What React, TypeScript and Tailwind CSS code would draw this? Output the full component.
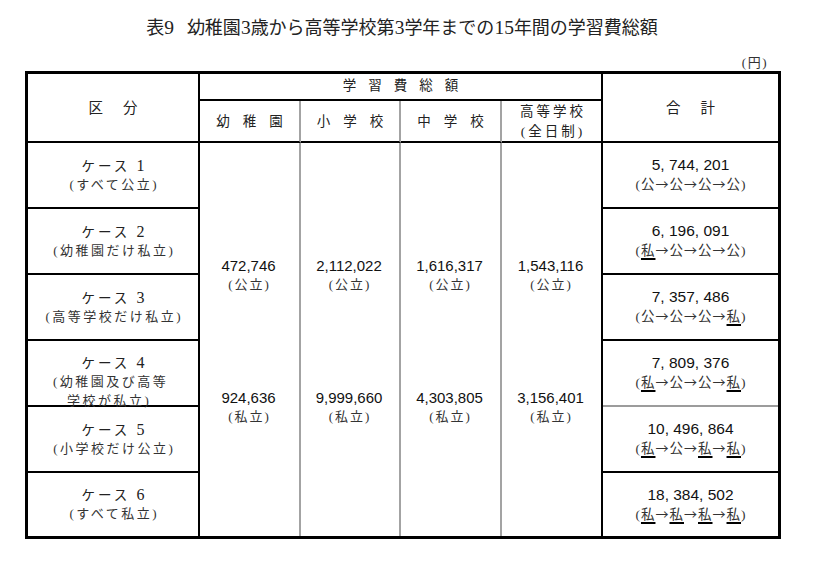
import React, { Fragment } from "react";

const serif = "font-['Liberation_Serif','Noto_Sans_CJK_JP',serif]";
const sans = "font-['Liberation_Sans','Noto_Sans_CJK_JP',sans-serif]";
const cjk = "font-['Noto_Sans_CJK_JP',sans-serif]";

type Kind = "公" | "私";

type CaseRow = {
  num: string;
  lines: string[];
  total: string;
  path: Kind[];
};

const cases: CaseRow[] = [
  { num: "1", lines: ["(すべて公立)"], total: "5, 744, 201", path: ["公", "公", "公", "公"] },
  { num: "2", lines: ["(幼稚園だけ私立)"], total: "6, 196, 091", path: ["私", "公", "公", "公"] },
  { num: "3", lines: ["(高等学校だけ私立)"], total: "7, 357, 486", path: ["公", "公", "公", "私"] },
  { num: "4", lines: ["(幼稚園及び高等", "学校が私立)"], total: "7, 809, 376", path: ["私", "公", "公", "私"] },
  { num: "5", lines: ["(小学校だけ公立)"], total: "10, 496, 864", path: ["私", "公", "私", "私"] },
  { num: "6", lines: ["(すべて私立)"], total: "18, 384, 502", path: ["私", "私", "私", "私"] },
];

const rowStart = [
  "row-start-3",
  "row-start-4",
  "row-start-5",
  "row-start-6",
  "row-start-7",
  "row-start-8",
];

const bottomBorder = [
  "border-b-2 border-black",
  "border-b-2 border-black",
  "border-b-2 border-black",
  "border-b-2 border-[#9c9c9c]",
  "border-b-2 border-black",
  "",
];

function Path({ p }: { p: Kind[] }) {
  return (
    <div className={`${serif} text-[13.5px] leading-[19px] tracking-[1px] text-[#333] pl-[1px]`}>
      (
      {p.map((c, i) => (
        <Fragment key={i}>
          {i > 0 && <span className={`${cjk} text-[13px]`}>→</span>}
          {c === "私" ? (
            <span className="underline decoration-black decoration-[1.5px] underline-offset-[3px]">私</span>
          ) : (
            "公"
          )}
        </Fragment>
      ))}
      )
    </div>
  );
}

const middle = [
  { a: "472,746", b: "924,636", border: "border-r-2 border-[#a3a3a3]", col: "col-start-2" },
  { a: "2,112,022", b: "9,999,660", border: "border-r-2 border-[#a3a3a3]", col: "col-start-3" },
  { a: "1,616,317", b: "4,303,805", border: "border-r-2 border-[#a3a3a3]", col: "col-start-4" },
  { a: "1,543,116", b: "3,156,401", border: "border-r-2 border-black", col: "col-start-5" },
];

const subHeads = [
  { t: "幼稚園", col: "col-start-2", border: "border-r-2 border-[#a3a3a3]" },
  { t: "小学校", col: "col-start-3", border: "border-r-2 border-[#a3a3a3]" },
  { t: "中学校", col: "col-start-4", border: "border-r-2 border-[#a3a3a3]" },
];

function D({ children }: { children: React.ReactNode }) {
  return <span className="text-[19.5px]">{children}</span>;
}

export default function App() {
  return (
    <div className="w-[816px] h-[569px] bg-white text-[#1a1a1a] overflow-hidden">
      <div className="w-[756px] ml-[25px] pt-[15px]">
        <div className={`${serif} text-[18px] leading-[26px] h-[26px] text-center text-[#222] pr-[2px]`}>
          表<D>9</D>
          <span className="ml-[13px]">
            幼稚園<D>3</D>歳から高等学校第<D>3</D>学年までの<D>15</D>年間の学習費総額
          </span>
        </div>
        <div className={`${serif} mt-[14px] flex justify-end pr-[13px] text-[13px] leading-[16px] tracking-[1.5px] text-[#333]`}>
          (円)
        </div>
        <div className="grid grid-cols-[172px_101px_100px_101px_101px_175px] grid-rows-[27px_42px_66px_66px_66px_66px_66px_63px] border-[3px] border-black">
          {/* header */}
          <div className={`${serif} col-start-1 row-start-1 row-span-2 border-r-2 border-b-2 border-black flex items-center justify-center gap-[20px] text-[14.5px] text-[#222] pt-[2px]`}>
            <span>区</span>
            <span>分</span>
          </div>
          <div className={`${serif} col-start-2 col-span-4 row-start-1 border-r-2 border-b-2 border-black flex items-center justify-center text-[13.5px] tracking-[12px] pl-[12px] text-[#222]`}>
            学習費総額
          </div>
          {subHeads.map((h) => (
            <div
              key={h.t}
              className={`${serif} ${h.col} row-start-2 ${h.border} border-b-2 border-b-black flex items-center justify-center text-[13.5px] tracking-[13px] pl-[13px] pt-[3px] text-[#222]`}
            >
              {h.t}
            </div>
          ))}
          <div className={`${serif} col-start-5 row-start-2 border-r-2 border-b-2 border-black flex flex-col items-center justify-center text-[13.5px] leading-[20px] text-[#222] pt-[1px]`}>
            <span className="tracking-[3px] pl-[3px]">高等学校</span>
            <span className="tracking-[3px] pl-[3px]">(全日制)</span>
          </div>
          <div className={`${serif} col-start-6 row-start-1 row-span-2 border-b-2 border-black flex items-center justify-center gap-[20px] text-[14.5px] text-[#222] pt-[2px]`}>
            <span>合</span>
            <span>計</span>
          </div>

          {/* case column & totals */}
          {cases.map((c, i) => (
            <Fragment key={c.num}>
              <div
                className={`col-start-1 ${rowStart[i]} border-r-2 border-black ${bottomBorder[i]} flex flex-col items-center ${
                  i === 3 ? "justify-start pt-[13px]" : "justify-center"
                }`}
              >
                <div className={`${serif} text-[13.5px] leading-[18px] tracking-[3px] pl-[3px] text-[#222]`}>
                  ケース <span className="text-[16px]">{c.num}</span>
                </div>
                {c.lines.length === 1 ? (
                  <div className={`${serif} text-[13px] leading-[18px] tracking-[2.5px] pl-[2.5px] text-[#333]`}>
                    {c.lines[0]}
                  </div>
                ) : (
                  <div className={`${serif} text-[13px] leading-[18.5px] tracking-[2.5px] text-[#333] w-[120px]`}>
                    <div>{c.lines[0]}</div>
                    <div className="pl-[14px]">{c.lines[1]}</div>
                  </div>
                )}
              </div>
              <div className={`col-start-6 ${rowStart[i]} ${bottomBorder[i]} flex flex-col items-center justify-center`}>
                <div className={`${sans} text-[15.5px] leading-[18px] text-[#111]`}>{c.total}</div>
                <Path p={c.path} />
              </div>
            </Fragment>
          ))}

          {/* middle columns */}
          {middle.map((m) => (
            <div
              key={m.a}
              className={`${m.col} row-start-3 row-span-6 ${m.border} flex flex-col items-center pt-[114px] pr-[2px]`}
            >
              <div className={`${sans} text-[15px] leading-[18px] text-[#111]`}>{m.a}</div>
              <div className={`${serif} text-[13px] leading-[19px] tracking-[2px] pl-[2px] text-[#333]`}>(公立)</div>
              <div className={`${sans} mt-[95px] text-[15px] leading-[18px] text-[#111]`}>{m.b}</div>
              <div className={`${serif} text-[13px] leading-[19px] tracking-[2px] pl-[2px] text-[#333]`}>(私立)</div>
            </div>
          ))}
        </div>
      </div>
    </div>
  );
}
